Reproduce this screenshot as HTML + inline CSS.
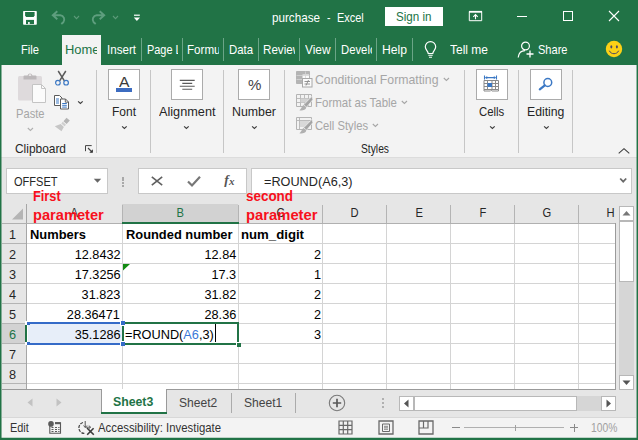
<!DOCTYPE html>
<html><head><meta charset="utf-8"><title>purchase - Excel</title>
<style>
html,body{margin:0;padding:0;background:#fff;}
body{width:638px;height:440px;overflow:hidden;font-family:"Liberation Sans",sans-serif;}
#app{position:relative;width:638px;height:440px;overflow:hidden;background:#e6e6e6;}
#app div,#app span,#app svg{position:absolute;}
.t{white-space:pre;line-height:20px;height:20px;}
.clip{left:0;top:0;height:440px;overflow:hidden;}
.g{background:#217346;}
.box{background:#fff;border:1px solid #c8c8c8;box-sizing:border-box;}
.bigbtn{background:#fff;border:1px solid #ababab;box-sizing:border-box;top:69px;height:31px;width:32px;}
.vsep{width:1px;background:#c6c6c6;top:70px;height:83px;}
.tsep{width:1px;background:#6ba587;top:38px;height:23px;}
.gl{background:#d4d4d4;}
.hl{background:#b4b4b4;}

</style></head>
<body>
<div id="app">
<!-- chrome backgrounds -->
<div class="g" style="left:0;top:0;width:638px;height:65px"></div>
<div style="left:62px;top:35px;width:39px;height:31px;background:#f3f3f3"></div>
<div style="left:0;top:65px;width:638px;height:92px;background:#f3f3f3"></div>
<div style="left:0;top:157px;width:638px;height:1px;background:#dcdcdc"></div>
<!-- tab separators -->
<div class="tsep" style="left:141px"></div><div class="tsep" style="left:182px"></div><div class="tsep" style="left:223px"></div><div class="tsep" style="left:258px"></div><div class="tsep" style="left:299px"></div><div class="tsep" style="left:335px"></div><div class="tsep" style="left:376px"></div><div class="tsep" style="left:412px"></div>
<!-- sign in -->
<div style="left:385px;top:7px;width:58px;height:19px;background:#fff"></div>
<!-- ribbon separators -->
<div class="vsep" style="left:96px"></div><div class="vsep" style="left:150px"></div><div class="vsep" style="left:223px"></div><div class="vsep" style="left:284px"></div><div class="vsep" style="left:464px"></div><div class="vsep" style="left:518px"></div><div class="vsep" style="left:572px"></div>
<!-- big buttons -->
<div class="bigbtn" style="left:108px"></div>
<div class="bigbtn" style="left:171px"></div>
<div class="bigbtn" style="left:238px"></div>
<div class="bigbtn" style="left:476px"></div>
<div class="bigbtn" style="left:530px"></div>
<!-- formula bar -->
<div class="box" style="left:6px;top:168px;width:102px;height:26px"></div>
<div class="box" style="left:138px;top:168px;width:109px;height:26px"></div>
<div class="box" style="left:251px;top:168px;width:381px;height:26px"></div>
<!-- grid -->
<div style="left:27px;top:224px;width:588px;height:165px;background:#fff"></div>
<div style="left:122px;top:204px;width:116px;height:18px;background:#d2d2d2"></div>
<div class="g" style="left:122px;top:222px;width:117px;height:2px"></div>
<div style="left:2px;top:323px;width:24px;height:20px;background:#d2d2d2"></div>
<div class="gl" style="left:122px;top:224px;width:1px;height:165px"></div><div class="hl" style="left:122px;top:205px;width:1px;height:18px"></div><div class="gl" style="left:238px;top:224px;width:1px;height:165px"></div><div class="hl" style="left:238px;top:205px;width:1px;height:18px"></div><div class="gl" style="left:322px;top:224px;width:1px;height:165px"></div><div class="hl" style="left:322px;top:205px;width:1px;height:18px"></div><div class="gl" style="left:386px;top:224px;width:1px;height:165px"></div><div class="hl" style="left:386px;top:205px;width:1px;height:18px"></div><div class="gl" style="left:450px;top:224px;width:1px;height:165px"></div><div class="hl" style="left:450px;top:205px;width:1px;height:18px"></div><div class="gl" style="left:514px;top:224px;width:1px;height:165px"></div><div class="hl" style="left:514px;top:205px;width:1px;height:18px"></div><div class="gl" style="left:578px;top:224px;width:1px;height:165px"></div><div class="hl" style="left:578px;top:205px;width:1px;height:18px"></div><div class="gl" style="left:27px;top:243px;width:588px;height:1px"></div><div class="hl" style="left:2px;top:243px;width:24px;height:1px"></div><div class="gl" style="left:27px;top:263px;width:588px;height:1px"></div><div class="hl" style="left:2px;top:263px;width:24px;height:1px"></div><div class="gl" style="left:27px;top:283px;width:588px;height:1px"></div><div class="hl" style="left:2px;top:283px;width:24px;height:1px"></div><div class="gl" style="left:27px;top:303px;width:588px;height:1px"></div><div class="hl" style="left:2px;top:303px;width:24px;height:1px"></div><div class="gl" style="left:27px;top:323px;width:588px;height:1px"></div><div class="hl" style="left:2px;top:323px;width:24px;height:1px"></div><div class="gl" style="left:27px;top:343px;width:588px;height:1px"></div><div class="hl" style="left:2px;top:343px;width:24px;height:1px"></div><div class="gl" style="left:27px;top:363px;width:588px;height:1px"></div><div class="hl" style="left:2px;top:363px;width:24px;height:1px"></div><div class="gl" style="left:27px;top:383px;width:588px;height:1px"></div><div class="hl" style="left:2px;top:383px;width:24px;height:1px"></div>
<!-- header / grid borders -->
<div style="left:26px;top:204px;width:1px;height:186px;background:#a6a6a6"></div>
<div style="left:2px;top:223px;width:614px;height:1px;background:#b0b0b0"></div>
<div style="left:615px;top:223px;width:1px;height:167px;background:#9a9a9a"></div>
<div style="left:2px;top:389px;width:614px;height:1px;background:#9a9a9a"></div>
<div class="g" style="left:122px;top:222px;width:117px;height:2px"></div>
<svg style="left:11px;top:208px" width="13" height="12" viewBox="0 0 13 12"><path d="M12 0.5V11.5H1Z" fill="#b4b4b4"/></svg>
<!-- A6 reference highlight -->
<div style="left:27px;top:323px;width:95px;height:21px;background:#e7eef9"></div>
<div style="left:27px;top:322px;width:95px;height:2px;background:#356bc8"></div>
<div style="left:27px;top:343px;width:95px;height:2px;background:#356bc8"></div>
<div style="left:25px;top:321px;width:3px;height:24px;background:#fff"></div>
<div class="g" style="left:25px;top:325px;width:2px;height:17px"></div>
<div style="left:27px;top:322px;width:3px;height:3px;background:#356bc8"></div>
<div style="left:27px;top:342px;width:3px;height:3px;background:#356bc8"></div>
<!-- B6 edit cell -->
<div style="left:122px;top:322px;width:117px;height:23px;border:2px solid #217346;box-sizing:border-box;background:#fff"></div>
<div style="left:236px;top:342px;width:5px;height:5px;background:#217346;border-left:1px solid #fff;border-top:1px solid #fff;box-sizing:border-box"></div>
<div style="left:119.500px;top:320.500px;width:5.500px;height:5px;background:#fff"></div>
<div style="left:119.500px;top:340.500px;width:5.500px;height:5px;background:#fff"></div>
<div style="left:120.500px;top:321px;width:4px;height:4px;background:#356bc8"></div>
<div style="left:120.500px;top:341.500px;width:4px;height:4px;background:#356bc8"></div>
<div style="left:215px;top:324px;width:1px;height:18px;background:#000"></div>
<!-- green error triangle B3 -->
<svg style="left:123px;top:264px" width="7" height="7" viewBox="0 0 7 7"><path d="M0 0H7L0 6.500Z" fill="#128a12"/></svg>
<!-- vertical scrollbar -->
<div style="left:619px;top:206px;width:15px;height:183px;background:#d6d6d6"></div>
<div class="box" style="left:619px;top:206px;width:15px;height:15px;border-color:#b8b8b8"></div>
<svg style="left:622px;top:210px" width="9" height="6" viewBox="0 0 9 6"><path d="M0.5 5.5L4.5 1L8.5 5.5Z" fill="#777"/></svg>
<div class="box" style="left:619px;top:221px;width:15px;height:61px;border-color:#b8b8b8"></div>
<div class="box" style="left:619px;top:375px;width:15px;height:15px;border-color:#b8b8b8"></div>
<svg style="left:622px;top:380px" width="9" height="6" viewBox="0 0 9 6"><path d="M0.5 0.5L4.5 5L8.5 0.5Z" fill="#555"/></svg>
<!-- sheet tab bar -->
<div style="left:2px;top:390px;width:634px;height:27px;background:#e6e6e6"></div>
<div style="left:101px;top:389px;width:66px;height:24px;background:#fff;border-left:1px solid #9a9a9a;border-right:1px solid #9a9a9a;box-sizing:border-box"></div>
<div class="g" style="left:101px;top:412px;width:66px;height:2px"></div>
<div style="left:231px;top:393px;width:1px;height:20px;background:#ababab"></div>
<div style="left:295px;top:393px;width:1px;height:20px;background:#ababab"></div>
<svg style="left:27px;top:398px" width="6" height="9" viewBox="0 0 6 9"><path d="M5.5 0.5V8.5L0.5 4.5Z" fill="#c2c2c2"/></svg>
<svg style="left:56px;top:398px" width="6" height="9" viewBox="0 0 6 9"><path d="M0.5 0.5V8.5L5.5 4.5Z" fill="#c2c2c2"/></svg>
<svg style="left:328px;top:394px" width="18" height="18" viewBox="0 0 18 18"><circle cx="9" cy="9" r="7.7" fill="none" stroke="#7a7a7a" stroke-width="1.1"/><path d="M9 4.8V13.2M4.8 9H13.2" stroke="#5a5a5a" stroke-width="1.7"/></svg>
<div style="left:382px;top:398px;width:2px;height:2px;background:#b0b0b0"></div><div style="left:382px;top:402px;width:2px;height:2px;background:#b0b0b0"></div><div style="left:382px;top:406px;width:2px;height:2px;background:#b0b0b0"></div>
<!-- horizontal scrollbar -->
<div style="left:399px;top:396px;width:217px;height:15px;background:#d6d6d6"></div>
<div class="box" style="left:399px;top:396px;width:15px;height:15px;border-color:#b8b8b8"></div>
<svg style="left:403px;top:399px" width="6" height="9" viewBox="0 0 6 9"><path d="M5.5 0.5V8.5L1 4.5Z" fill="#555"/></svg>
<div class="box" style="left:414px;top:396px;width:163px;height:15px;border-color:#b8b8b8"></div>
<div class="box" style="left:601px;top:396px;width:15px;height:15px;border-color:#b8b8b8"></div>
<svg style="left:606px;top:399px" width="6" height="9" viewBox="0 0 6 9"><path d="M0.5 0.5V8.5L5 4.5Z" fill="#555"/></svg>
<!-- status bar -->
<div style="left:2px;top:417px;width:634px;height:21px;background:#f3f3f3"></div>
<div style="left:2px;top:417px;width:634px;height:1px;background:#d8d8d8"></div>
<!-- view icons -->
<svg style="left:338px;top:420px" width="15" height="15" viewBox="0 0 15 15"><path d="M1 1H14V14H1ZM1 5.3H14M1 9.7H14M5.3 1V14M9.7 1V14" fill="none" stroke="#6a6a6a" stroke-width="1.2"/></svg>
<svg style="left:378px;top:420px" width="16" height="15" viewBox="0 0 16 15"><path d="M1 1H15V14H1Z" fill="none" stroke="#6a6a6a" stroke-width="1.3"/><path d="M4.5 4H11.500V11.500H4.500Z" fill="none" stroke="#6a6a6a" stroke-width="1"/><path d="M6 6.300H10M6 7.800H10M6 9.300H10" stroke="#6a6a6a" stroke-width="0.8"/></svg>
<svg style="left:418px;top:420px" width="16" height="15" viewBox="0 0 16 15"><path d="M1 1H15V14H1Z" fill="none" stroke="#6a6a6a" stroke-width="1.3"/><path d="M5.500 1V8H1M10 1V8H5.500" fill="none" stroke="#6a6a6a" stroke-width="1.2"/></svg>
<!-- zoom slider -->
<div style="left:452px;top:427px;width:8px;height:1px;background:#8a8a8a"></div>
<div style="left:464px;top:427px;width:100px;height:1px;background:#b0b0b0"></div>
<div style="left:515px;top:425px;width:1px;height:6px;background:#a0a0a0"></div>
<div style="left:570px;top:427px;width:8px;height:1px;background:#8a8a8a"></div>
<div style="left:573.5px;top:423.500px;width:1px;height:8px;background:#8a8a8a"></div>
<!-- window border -->
<div class="g" style="left:0;top:0;width:1px;height:440px"></div><div style="left:1px;top:0;width:1px;height:440px;background:rgba(33,115,70,0.5)"></div>
<div class="g" style="left:637px;top:0;width:1px;height:440px"></div><div style="left:636px;top:0;width:1px;height:440px;background:rgba(33,115,70,0.45)"></div>
<div class="g" style="left:0;top:438px;width:638px;height:2px"></div><div style="left:0;top:437px;width:638px;height:1px;background:rgba(33,115,70,0.25)"></div>
<!-- title bar icons -->
<svg style="left:23px;top:11px" width="14" height="14" viewBox="0 0 14 14"><rect x="0.100" y="0.100" width="13.700" height="13.700" rx="0.700" fill="#fff"/><path d="M2.100 1.100H11.600V4.600L10.600 6H3.100L2.100 4.600Z" fill="#217346"/><path d="M3 8.900H11V13.100H3Z" fill="#217346"/><rect x="5.100" y="11" width="1.600" height="2.200" fill="#fff"/></svg>
<svg style="left:51px;top:10px" width="16" height="15" viewBox="0 0 16 15"><path d="M6.300 1.300L1.800 5.300L6.300 9.300M2.300 5.300H9.300A4.300 4.300 0 0 1 12.300 12.300L10.300 14" fill="none" stroke="#5e9e7e" stroke-width="1.900"/></svg>
<svg style="left:73px;top:15px" width="7" height="5" viewBox="0 0 7 5"><path d="M1 1L3.500 3.600L6 1" fill="none" stroke="#5c9a79" stroke-width="1.100"/></svg>
<svg style="left:90px;top:10px" width="16" height="15" viewBox="0 0 16 15"><path d="M9.700 1.300L14.200 5.300L9.700 9.300M13.700 5.300H6.700A4.300 4.300 0 0 0 3.700 12.300L5.700 14" fill="none" stroke="#5e9e7e" stroke-width="1.900"/></svg>
<svg style="left:112px;top:15px" width="7" height="5" viewBox="0 0 7 5"><path d="M1 1L3.500 3.600L6 1" fill="none" stroke="#5c9a79" stroke-width="1.100"/></svg>
<svg style="left:133px;top:14px" width="8" height="8" viewBox="0 0 8 8"><path d="M1 1.200H6.800" stroke="#fff" stroke-width="1.200"/><path d="M0.800 3.600H7L3.900 7Z" fill="#fff"/></svg>
<!-- window controls -->
<svg style="left:468px;top:10px" width="15" height="12" viewBox="0 0 15 12"><path d="M1.300 1.500H13.700V10.700H1.300Z" fill="none" stroke="#fff" stroke-width="1"/><path d="M1 1.800H14" stroke="#fff" stroke-width="1.800"/><path d="M7.500 9.300V4.600M5.300 6.800L7.500 4.500L9.700 6.800" fill="none" stroke="#fff" stroke-width="1.100"/></svg>
<div style="left:517px;top:16px;width:10px;height:1px;background:#fff"></div>
<div style="left:563px;top:11px;width:10px;height:10px;border:1px solid #fff;box-sizing:border-box"></div>
<svg style="left:608px;top:10px" width="12" height="12" viewBox="0 0 12 12"><path d="M1 1L11 11M11 1L1 11" stroke="#fff" stroke-width="1.100"/></svg>
<!-- tell me bulb -->
<svg style="left:423px;top:41px" width="15" height="17" viewBox="0 0 15 17"><path d="M5.200 12.500C5.200 10 2.300 9 2.300 5.800A5.200 5.200 0 0 1 12.700 5.800C12.700 9 9.800 10 9.800 12.500Z" fill="none" stroke="#fff" stroke-width="1.200"/><path d="M5.300 14.300H9.700M6 16.200H9" stroke="#fff" stroke-width="1.100"/></svg>
<!-- share icon -->
<svg style="left:517px;top:41px" width="18" height="17" viewBox="0 0 18 17"><circle cx="8.500" cy="5" r="3.900" fill="none" stroke="#fff" stroke-width="1.200"/><path d="M1.200 16.500C1.800 11.500 5 9.600 8 9.600" fill="none" stroke="#fff" stroke-width="1.200"/><path d="M13 9.500V16.500M9.500 13H16.500" stroke="#fff" stroke-width="1.300"/></svg>
<!-- smiley -->
<svg style="left:605px;top:40px" width="18" height="18" viewBox="0 0 18 18"><circle cx="9" cy="9" r="8.200" fill="#fcd116"/><ellipse cx="6.300" cy="6.800" rx="1" ry="1.600" fill="#4b4866"/><ellipse cx="11.900" cy="6.800" rx="1" ry="1.600" fill="#4b4866"/><path d="M4.300 10.700C6 14.700 12 14.700 13.700 10.700" fill="none" stroke="#4b4866" stroke-width="1"/></svg>
<!-- clipboard group icons -->
<svg style="left:17px;top:72px" width="30" height="32" viewBox="0 0 30 32"><rect x="1" y="4" width="24" height="24.500" rx="1.500" fill="#dedadc"/><path d="M6.500 7.500V4.500A1 1 0 0 1 7.500 3.500H10.500A2.600 2.600 0 0 1 15.500 3.500H18.500A1 1 0 0 1 19.500 4.500V7.500Z" fill="#bcb8ba"/><rect x="11.800" y="2.300" width="2.400" height="1.700" fill="#e9e6e7"/><path d="M15.500 12.500H24.500L28.500 16.500V30.500H15.500Z" fill="#fbfbfb" stroke="#c4c4c4" stroke-width="1"/><path d="M24.500 12.500V16.500H28.500" fill="none" stroke="#c4c4c4" stroke-width="1"/></svg>
<svg style="left:27px;top:127px" width="7" height="5" viewBox="0 0 7 5"><path d="M0.800 1L3.400 3.500L6 1" fill="none" stroke="#b0b0b0" stroke-width="1.100"/></svg>
<svg style="left:54px;top:70px" width="16" height="17" viewBox="0 0 16 17"><path d="M4.200 1L10.400 10.800M11.800 1L5.600 10.800" stroke="#5a5a5a" stroke-width="1.500"/><circle cx="3.900" cy="12.700" r="2.300" fill="none" stroke="#3b78c4" stroke-width="1.200"/><circle cx="12.100" cy="12.700" r="2.300" fill="none" stroke="#3b78c4" stroke-width="1.200"/></svg>
<svg style="left:53px;top:94px" width="17" height="16" viewBox="0 0 17 16"><path d="M1.500 1.500H6.500L9 4V11.500H1.500Z" fill="#fff" stroke="#5a5a5a" stroke-width="1"/><path d="M3 5H6M3 7H6M3 9H6" stroke="#3b78c4" stroke-width="1"/><path d="M7.500 5H12.500L15.500 8V15H7.500Z" fill="#fff" stroke="#5a5a5a" stroke-width="1"/><path d="M12.300 5V8.200H15.500" fill="none" stroke="#5a5a5a" stroke-width="0.900"/><path d="M9.200 9.500H13.800M9.200 11.300H13.800M9.200 13.100H13.800" stroke="#3b78c4" stroke-width="1"/></svg>
<svg style="left:77px;top:100px" width="7" height="5" viewBox="0 0 7 5"><path d="M1.100 1.300L3.400 3.500L5.700 1.300" fill="none" stroke="#3c3c3c" stroke-width="1.150"/></svg>
<svg style="left:54px;top:117px" width="17" height="15" viewBox="0 0 17 15"><path d="M12.500 0.800L15.800 3.600L12.600 7L9.500 4.200Z" fill="#b5b5b5"/><path d="M8.800 4.800L12 7.700L10.500 9.300L7.300 6.400Z" fill="#cfcfcf"/><path d="M6.700 7L9.900 9.900L7.500 14.200L0.800 9.200Z" fill="#c6c6c6"/></svg>
<!-- dialog launcher -->
<svg style="left:85px;top:145px" width="9" height="9" viewBox="0 0 9 9"><path d="M0.500 6.200V0.600H6.700" fill="none" stroke="#444" stroke-width="1"/><path d="M3 3L7 7" stroke="#444" stroke-width="1.100"/><path d="M7.900 4.200V7.800H4.300Z" fill="#333"/></svg>
<!-- big button icons -->
<div style="left:116px;top:88px;width:16px;height:4px;background:#3d6cc0"></div>
<svg style="left:179px;top:78.500px" width="16" height="12" viewBox="0 0 16 12"><path d="M0.800 1.400H15.700M3.300 4.350H13.200M0.800 7.300H15.700M3.300 10.250H13.200" stroke="#5a5a5a" stroke-width="1.100"/></svg>
<svg style="left:483px;top:75px" width="17" height="18" viewBox="0 0 17 18"><path d="M1.500 0.500V4.500M13.500 0.500V4.500M2.500 2.600H12.500" stroke="#3b78c4" stroke-width="1.100"/><path d="M2.200 2.600L4.200 1V4.200ZM12.800 2.600L10.800 1V4.200Z" fill="#3b78c4"/><path d="M1 5.500H15.500V14.500H1ZM1 8.500H15.500M1 11.500H15.500M4.500 5.500V14.500M9 5.500V14.500M12.500 5.500V14.500" fill="none" stroke="#8a8a8a" stroke-width="1"/><rect x="4.500" y="8" width="4.500" height="4" fill="#3b78c4"/><path d="M1 14.500V16H7.500L8.200 15.300L9 16H15.500V14.500" fill="none" stroke="#8a8a8a" stroke-width="1"/></svg>
<svg style="left:538px;top:77px" width="16" height="14" viewBox="0 0 16 14"><circle cx="9.800" cy="5.500" r="3.900" fill="none" stroke="#3b78c4" stroke-width="1.500"/><path d="M6.800 8.400L1.800 12.300" stroke="#3b78c4" stroke-width="2.200" stroke-linecap="round"/></svg>
<!-- big button chevrons -->
<svg style="left:120.500px;top:125px" width="7" height="5" viewBox="0 0 7 5"><path d="M1.100 1.300L3.400 3.500L5.700 1.300" fill="none" stroke="#3c3c3c" stroke-width="1.150"/></svg>
<svg style="left:183px;top:125px" width="7" height="5" viewBox="0 0 7 5"><path d="M1.100 1.300L3.400 3.500L5.700 1.300" fill="none" stroke="#3c3c3c" stroke-width="1.150"/></svg>
<svg style="left:250.500px;top:125px" width="7" height="5" viewBox="0 0 7 5"><path d="M1.100 1.300L3.400 3.500L5.700 1.300" fill="none" stroke="#3c3c3c" stroke-width="1.150"/></svg>
<svg style="left:488.500px;top:125px" width="7" height="5" viewBox="0 0 7 5"><path d="M1.100 1.300L3.400 3.500L5.700 1.300" fill="none" stroke="#3c3c3c" stroke-width="1.150"/></svg>
<svg style="left:542.500px;top:125px" width="7" height="5" viewBox="0 0 7 5"><path d="M1.100 1.300L3.400 3.500L5.700 1.300" fill="none" stroke="#3c3c3c" stroke-width="1.150"/></svg>
<!-- styles icons (disabled) -->
<svg style="left:296px;top:71px" width="17" height="17" viewBox="0 0 17 17"><path d="M0.500 0.500H13.500V12.500H0.500Z" fill="#fafafa" stroke="#b4b4b4" stroke-width="1"/><path d="M0.500 0.500H6.500V12.500H0.500ZM6.500 0.500H13.500V3.500H6.500Z" fill="#b4b4b4"/><path d="M0.500 4.500H13.500M0.500 8.500H13.500M9.500 0.500V12.500" stroke="#d6d6d6" stroke-width="0.800"/><rect x="6.500" y="7.500" width="9.500" height="8.500" fill="#fafafa" stroke="#a8a8a8" stroke-width="1"/><path d="M8.500 10.500H14M8.500 13H14M12.500 9L10 14.500" stroke="#8a8a8a" stroke-width="0.900"/></svg>
<svg style="left:296px;top:94px" width="17" height="17" viewBox="0 0 17 17"><path d="M0.500 0.500H15.500V12.500H0.500Z" fill="#f2f2f2" stroke="#b4b4b4" stroke-width="1"/><path d="M0.500 4.500H15.500M0.500 8.500H15.500M4.500 0.500V12.500M8.500 0.500V12.500M12.500 0.500V12.500" stroke="#b4b4b4" stroke-width="0.900"/><rect x="4.500" y="4.500" width="8" height="4" fill="#d2d2d2"/><path d="M16 2.300L16.900 5.600L10.600 13.200L7.600 10.800Z" fill="#a4a4a4" stroke="#f3f3f3" stroke-width="0.700"/><path d="M7.400 11L10.300 13.400C9.600 16.200 6 16.800 3.400 16.200C5.600 15 5.400 12.600 7.400 11Z" fill="#b0b0b0"/></svg>
<svg style="left:296px;top:117px" width="17" height="17" viewBox="0 0 17 17"><path d="M0.500 0.500H15.500V12.500H0.500Z" fill="#f2f2f2" stroke="#b4b4b4" stroke-width="1"/><path d="M0.500 3.500H15.500M3.500 0.500V12.500" stroke="#b4b4b4" stroke-width="0.900"/><rect x="4" y="4" width="9" height="6" fill="#d8d8d8"/><path d="M16 2.300L16.900 5.600L10.600 13.200L7.600 10.800Z" fill="#a4a4a4" stroke="#f3f3f3" stroke-width="0.700"/><path d="M7.400 11L10.300 13.400C9.600 16.200 6 16.800 3.400 16.200C5.600 15 5.400 12.600 7.400 11Z" fill="#b0b0b0"/></svg>
<!-- styles chevrons -->
<svg style="left:443px;top:77px" width="7" height="5" viewBox="0 0 7 5"><path d="M0.800 1L3.400 3.500L6 1" fill="none" stroke="#a6a6a6" stroke-width="1.100"/></svg>
<svg style="left:401px;top:99.800px" width="7" height="5" viewBox="0 0 7 5"><path d="M0.800 1L3.400 3.500L6 1" fill="none" stroke="#a6a6a6" stroke-width="1.100"/></svg>
<svg style="left:372px;top:122.600px" width="7" height="5" viewBox="0 0 7 5"><path d="M0.800 1L3.400 3.500L6 1" fill="none" stroke="#a6a6a6" stroke-width="1.100"/></svg>
<!-- collapse ribbon caret -->
<svg style="left:617.800px;top:146px" width="12" height="9" viewBox="0 0 12 9"><path d="M0.700 7.400L6 2.600L11.300 7.400" fill="none" stroke="#3c3c3c" stroke-width="1.050"/></svg>
<!-- formula bar icons -->
<svg style="left:93px;top:177.500px" width="9" height="6" viewBox="0 0 9 6"><path d="M0.800 0.800H8.200L4.500 4.800Z" fill="#666"/></svg>
<div style="left:122px;top:176.5px;width:2px;height:2px;background:#a8a8a8"></div><div style="left:122px;top:179.2px;width:2px;height:2px;background:#a8a8a8"></div><div style="left:122px;top:181.9px;width:2px;height:2px;background:#a8a8a8"></div><div style="left:122px;top:184.6px;width:2px;height:2px;background:#a8a8a8"></div>
<svg style="left:150px;top:175px" width="14" height="12" viewBox="0 0 14 12"><path d="M1.800 1.800L12.200 10.200M12.200 1.800L1.800 10.200" stroke="#606060" stroke-width="1.600"/></svg>
<svg style="left:186px;top:175px" width="16" height="13" viewBox="0 0 16 13"><path d="M2 6.500L6 10.500L14 1.800" fill="none" stroke="#777" stroke-width="2.200"/></svg>
<svg style="left:618px;top:177px" width="10" height="7" viewBox="0 0 10 7"><path d="M2.200 1.500L5.200 4.700L8.200 1.500" fill="none" stroke="#6a6a6a" stroke-width="1.800"/></svg>
<!-- status icons -->
<svg style="left:47px;top:420px" width="15" height="15" viewBox="0 0 15 15"><path d="M2.800 5V13.300H13.500V2.800H8" fill="none" stroke="#5a5a5a" stroke-width="1.100"/><path d="M8 3.200H13.500" stroke="#5a5a5a" stroke-width="2"/><circle cx="4" cy="3.900" r="2.800" fill="#5a5a5a"/><path d="M4.500 7.500H6.500M8 7.500H10M11.200 7.500H12.500M4.500 9.500H6.500M8 9.500H10M11.200 9.500H12.500M4.500 11.500H6.500M8 11.500H10M11.200 11.500H12.500" stroke="#5a5a5a" stroke-width="1.100"/></svg>
<svg style="left:78px;top:420px" width="18" height="16" viewBox="0 0 18 16"><path d="M5 2.500A5.600 5.600 0 0 0 6.500 13.500" fill="none" stroke="#444" stroke-width="1.250" stroke-dasharray="3 1.200"/><path d="M7.200 1V7.200" fill="none" stroke="#555" stroke-width="1"/><path d="M5.500 5.500L7.200 7.500L9 5.500" fill="none" stroke="#555" stroke-width="0.900"/><path d="M9 8L15.800 14.800M15.600 8.200L9.200 14.800" stroke="#3c3c3c" stroke-width="1.600"/><path d="M7.200 7.200H12.500M10.800 5.600L12.600 7.200L10.800 8.800" fill="none" stroke="#555" stroke-width="0.900"/></svg>

<span class="t" style="top:7.50px;font-size:13px;color:#fff;left:272px;transform-origin:0 50%;transform:scaleX(0.8975);">purchase</span>
<span class="t" style="top:7.50px;font-size:13px;color:#fff;left:327px;transform-origin:0 50%;transform:scaleX(0.8058);">-</span>
<span class="t" style="top:7.50px;font-size:13px;color:#fff;left:336.8px;transform-origin:0 50%;transform:scaleX(0.8397);">Excel</span>
<span class="t" style="top:6.83px;font-size:13.2px;color:#217346;left:396px;transform-origin:0 50%;transform:scaleX(0.8803);">Sign in</span>
<span class="t" style="top:39.50px;font-size:13px;color:#fff;left:21px;transform-origin:0 50%;transform:scaleX(0.8591);">File</span>
<div class="clip" style="width:96.5px"><span class="t" style="top:39.50px;font-size:13px;color:#217346;left:64.8px;transform-origin:0 50%;transform:scaleX(0.9946);">Home</span></div>
<span class="t" style="top:39.50px;font-size:13px;color:#fff;left:107px;transform-origin:0 50%;transform:scaleX(0.8919);">Insert</span>
<div class="clip" style="width:178px"><span class="t" style="top:39.50px;font-size:13px;color:#fff;left:146.7px;transform-origin:0 50%;transform:scaleX(0.8400);">Page Layout</span></div>
<div class="clip" style="width:219px"><span class="t" style="top:39.50px;font-size:13px;color:#fff;left:187px;transform-origin:0 50%;transform:scaleX(0.8943);">Formulas</span></div>
<span class="t" style="top:39.50px;font-size:13px;color:#fff;left:229px;transform-origin:0 50%;transform:scaleX(0.8737);">Data</span>
<div class="clip" style="width:295px"><span class="t" style="top:39.50px;font-size:13px;color:#fff;left:263px;transform-origin:0 50%;transform:scaleX(0.8943);">Review</span></div>
<span class="t" style="top:39.50px;font-size:13px;color:#fff;left:304.5px;transform-origin:0 50%;transform:scaleX(0.9122);">View</span>
<div class="clip" style="width:371.5px"><span class="t" style="top:39.50px;font-size:13px;color:#fff;left:340.5px;transform-origin:0 50%;transform:scaleX(0.8700);">Developer</span></div>
<span class="t" style="top:39.50px;font-size:13px;color:#fff;left:382px;transform-origin:0 50%;transform:scaleX(0.9346);">Help</span>
<span class="t" style="top:39.50px;font-size:13px;color:#fff;left:450px;transform-origin:0 50%;transform:scaleX(0.9226);">Tell me</span>
<span class="t" style="top:39.50px;font-size:13px;color:#fff;left:537.5px;transform-origin:0 50%;transform:scaleX(0.8501);">Share</span>
<span class="t" style="top:103.50px;font-size:13px;color:#a6a6a6;left:16px;transform-origin:0 50%;transform:scaleX(0.8571);">Paste</span>
<span class="t" style="top:139.00px;font-size:12.7px;color:#262626;left:15.0px;transform-origin:0 50%;transform:scaleX(0.9390);">Clipboard</span>
<span class="t" style="top:101.50px;font-size:13px;color:#262626;left:112px;transform-origin:0 50%;transform:scaleX(0.9225);">Font</span>
<span class="t" style="top:101.50px;font-size:13px;color:#262626;left:158.7px;transform-origin:0 50%;transform:scaleX(0.9773);">Alignment</span>
<span class="t" style="top:101.50px;font-size:13px;color:#262626;left:232px;transform-origin:0 50%;transform:scaleX(0.9514);">Number</span>
<span class="t" style="top:69.50px;font-size:13px;color:#a6a6a6;left:315px;transform-origin:0 50%;transform:scaleX(0.9442);">Conditional Formatting</span>
<span class="t" style="top:92.80px;font-size:13px;color:#a6a6a6;left:315px;transform-origin:0 50%;transform:scaleX(0.8820);">Format as Table</span>
<span class="t" style="top:116.10px;font-size:13px;color:#a6a6a6;left:315px;transform-origin:0 50%;transform:scaleX(0.8629);">Cell Styles</span>
<span class="t" style="top:139.00px;font-size:12.7px;color:#262626;left:360.5px;transform-origin:0 50%;transform:scaleX(0.8101);">Styles</span>
<span class="t" style="top:101.50px;font-size:13px;color:#262626;left:478.7px;transform-origin:0 50%;transform:scaleX(0.8752);">Cells</span>
<span class="t" style="top:101.50px;font-size:13px;color:#262626;left:526.6px;transform-origin:0 50%;transform:scaleX(0.9409);">Editing</span>
<span class="t" style="top:71.65px;font-size:14.3px;color:#3a3a3a;left:119.3px;transform-origin:0 50%;transform:scaleX(1.0998);">A</span>
<span class="t" style="top:74.80px;font-size:15px;color:#444;left:248px;transform-origin:0 50%;transform:scaleX(1.0042);">%</span>
<span class="t" style="top:171.93px;font-size:12.9px;color:#262626;left:13.5px;transform-origin:0 50%;transform:scaleX(0.8553);">OFFSET</span>
<span class="t" style="top:171.93px;font-size:12.9px;color:#262626;left:263.5px;transform-origin:0 50%;transform:scaleX(0.9844);">=ROUND(A6,3)</span>
<span class="t" style="top:169.82px;font-size:13.5px;color:#555;font-weight:bold;font-family:'Liberation Serif', serif;font-style:italic;left:224.3px;transform-origin:0 50%;transform:scaleX(1.0000);">f</span>
<span class="t" style="top:172.34px;font-size:10px;color:#555;font-weight:bold;font-family:'Liberation Serif', serif;font-style:italic;left:228.8px;transform-origin:0 50%;transform:scaleX(1.1000);">x</span>
<span class="t" style="top:203.17px;font-size:12.5px;color:#262626;left:70.33px;transform-origin:50% 50%;transform:scaleX(0.8943);">A</span>
<span class="t" style="top:203.17px;font-size:12.5px;color:#217346;left:175.83px;transform-origin:50% 50%;transform:scaleX(0.8943);">B</span>
<span class="t" style="top:203.17px;font-size:12.5px;color:#262626;left:275.98px;transform-origin:50% 50%;transform:scaleX(0.8943);">C</span>
<span class="t" style="top:203.17px;font-size:12.5px;color:#262626;left:350.48px;transform-origin:50% 50%;transform:scaleX(0.8943);">D</span>
<span class="t" style="top:203.17px;font-size:12.5px;color:#262626;left:414.83px;transform-origin:50% 50%;transform:scaleX(0.8943);">E</span>
<span class="t" style="top:203.17px;font-size:12.5px;color:#262626;left:479.18px;transform-origin:50% 50%;transform:scaleX(0.8943);">F</span>
<span class="t" style="top:203.17px;font-size:12.5px;color:#262626;left:542.13px;transform-origin:50% 50%;transform:scaleX(0.8943);">G</span>
<span class="t" style="top:203.17px;font-size:12.5px;color:#262626;left:605.98px;transform-origin:50% 50%;transform:scaleX(0.8943);">H</span>
<span class="t" style="top:186.35px;font-size:14px;color:#f8101c;font-weight:bold;left:33.3px;transform-origin:0 50%;transform:scaleX(0.9129);">First</span>
<span class="t" style="top:205.15px;font-size:14px;color:#f8101c;font-weight:bold;left:33.3px;transform-origin:0 50%;transform:scaleX(1.0443);">parameter</span>
<span class="t" style="top:186.35px;font-size:14px;color:#f8101c;font-weight:bold;left:246px;transform-origin:0 50%;transform:scaleX(0.9589);">second</span>
<span class="t" style="top:205.15px;font-size:14px;color:#f8101c;font-weight:bold;left:246px;transform-origin:0 50%;transform:scaleX(1.0561);">parameter</span>
<span class="t" style="top:392.33px;font-size:13.2px;color:#217346;font-weight:bold;left:113px;transform-origin:0 50%;transform:scaleX(0.9318);">Sheet3</span>
<span class="t" style="top:392.63px;font-size:13.2px;color:#444;left:179px;transform-origin:0 50%;transform:scaleX(0.9160);">Sheet2</span>
<span class="t" style="top:392.63px;font-size:13.2px;color:#444;left:243.75px;transform-origin:0 50%;transform:scaleX(0.9148);">Sheet1</span>
<span class="t" style="top:417.80px;font-size:12.7px;color:#333;left:9.5px;transform-origin:0 50%;transform:scaleX(0.8594);">Edit</span>
<span class="t" style="top:417.80px;font-size:12.7px;color:#333;left:98px;transform-origin:0 50%;transform:scaleX(0.8944);">Accessibility: Investigate</span>
<span class="t" style="top:417.80px;font-size:12.7px;color:#a0a0a0;left:591px;transform-origin:0 50%;transform:scaleX(0.8104);">100%</span>
<span class="t" style="top:224.87px;font-size:12.5px;color:#000;font-weight:bold;left:29.5px;transform-origin:0 50%;transform:scaleX(1.0334);">Numbers</span>
<span class="t" style="top:224.87px;font-size:12.5px;color:#000;font-weight:bold;left:125.5px;transform-origin:0 50%;transform:scaleX(1.0293);">Rounded number</span>
<span class="t" style="top:224.87px;font-size:12.5px;color:#000;font-weight:bold;left:241px;transform-origin:0 50%;transform:scaleX(1.0549);">num_digit</span>
<span class="t" style="top:324.87px;font-size:12.5px;color:#000;left:125px;transform-origin:0 50%;transform:scaleX(1.0181);">=ROUND(<span style="position:static;color:#3a78d8">A6</span>,3)</span>
<span class="t" style="top:244.73px;font-size:12.9px;color:#000;right:517.8px;transform-origin:100% 50%;transform:scaleX(0.9848);">12.8432</span>
<span class="t" style="top:264.73px;font-size:12.9px;color:#000;right:517.8px;transform-origin:100% 50%;transform:scaleX(0.9848);">17.3256</span>
<span class="t" style="top:284.73px;font-size:12.9px;color:#000;right:517.8px;transform-origin:100% 50%;transform:scaleX(0.9848);">31.823</span>
<span class="t" style="top:304.73px;font-size:12.9px;color:#000;right:517.8px;transform-origin:100% 50%;transform:scaleX(0.9848);">28.36471</span>
<span class="t" style="top:324.73px;font-size:12.9px;color:#000;right:517.8px;transform-origin:100% 50%;transform:scaleX(0.9848);">35.1286</span>
<span class="t" style="top:244.73px;font-size:12.9px;color:#000;right:401.7px;transform-origin:100% 50%;transform:scaleX(0.9848);">12.84</span>
<span class="t" style="top:264.73px;font-size:12.9px;color:#000;right:401.7px;transform-origin:100% 50%;transform:scaleX(0.9848);">17.3</span>
<span class="t" style="top:284.73px;font-size:12.9px;color:#000;right:401.7px;transform-origin:100% 50%;transform:scaleX(0.9848);">31.82</span>
<span class="t" style="top:304.73px;font-size:12.9px;color:#000;right:401.7px;transform-origin:100% 50%;transform:scaleX(0.9848);">28.36</span>
<span class="t" style="top:244.73px;font-size:12.9px;color:#000;right:317px;transform-origin:100% 50%;transform:scaleX(0.9848);">2</span>
<span class="t" style="top:264.73px;font-size:12.9px;color:#000;right:317px;transform-origin:100% 50%;transform:scaleX(0.9848);">1</span>
<span class="t" style="top:284.73px;font-size:12.9px;color:#000;right:317px;transform-origin:100% 50%;transform:scaleX(0.9848);">2</span>
<span class="t" style="top:304.73px;font-size:12.9px;color:#000;right:317px;transform-origin:100% 50%;transform:scaleX(0.9848);">2</span>
<span class="t" style="top:324.73px;font-size:12.9px;color:#000;right:317px;transform-origin:100% 50%;transform:scaleX(0.9848);">3</span>
<span class="t" style="top:224.73px;font-size:12.9px;color:#262626;left:9.41px;transform-origin:50% 50%;transform:scaleX(0.9848);">1</span>
<span class="t" style="top:244.73px;font-size:12.9px;color:#262626;left:9.41px;transform-origin:50% 50%;transform:scaleX(0.9848);">2</span>
<span class="t" style="top:264.73px;font-size:12.9px;color:#262626;left:9.41px;transform-origin:50% 50%;transform:scaleX(0.9848);">3</span>
<span class="t" style="top:284.73px;font-size:12.9px;color:#262626;left:9.41px;transform-origin:50% 50%;transform:scaleX(0.9848);">4</span>
<span class="t" style="top:304.73px;font-size:12.9px;color:#262626;left:9.41px;transform-origin:50% 50%;transform:scaleX(0.9848);">5</span>
<span class="t" style="top:324.73px;font-size:12.9px;color:#217346;left:9.41px;transform-origin:50% 50%;transform:scaleX(0.9848);">6</span>
<span class="t" style="top:344.73px;font-size:12.9px;color:#262626;left:9.41px;transform-origin:50% 50%;transform:scaleX(0.9848);">7</span>
<span class="t" style="top:364.73px;font-size:12.9px;color:#262626;left:9.41px;transform-origin:50% 50%;transform:scaleX(0.9848);">8</span>
</div>
</body></html>
